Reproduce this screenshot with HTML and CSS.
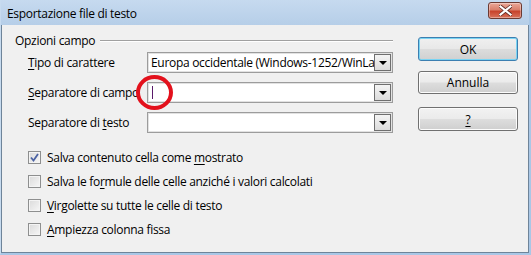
FILE: index.html
```html
<!DOCTYPE html>
<html lang="it">
<head>
    <meta charset="UTF-8">
    <title>Esportazione file di testo</title>
    <link rel="stylesheet" href="styles.css">
</head>
<body>
    <div class="window">
        <div class="titlebar">
            <span class="title">Esportazione file di testo</span>
            <span class="close-btn">
                <svg width="13" height="11" viewBox="0 0 13 11">
                    <path d="M1.5 1.5 L11.5 9.5 M11.5 1.5 L1.5 9.5" stroke="#5a2620" stroke-width="3.6" stroke-linecap="square"/>
                    <path d="M1.5 1.5 L11.5 9.5 M11.5 1.5 L1.5 9.5" stroke="#fff" stroke-width="2.2" stroke-linecap="square"/>
                </svg>
            </span>
        </div>

        <div class="client">
            <div class="options">
                <div class="group-title">
                    <span>Opzioni campo</span>
                    <div class="rule"></div>
                </div>

                <div class="field-row">
                    <label><u>T</u>ipo di carattere</label>
                    <div class="combo">
                        <span class="combo-text">Europa occidentale (Windows-1252/WinLatin 1)</span>
                        <span class="combo-btn"></span>
                    </div>
                </div>
                <div class="field-row sep-row">
                    <label><u>S</u>eparatore di campo</label>
                    <div class="combo">
                        <span class="combo-text"><span class="caret"></span></span>
                        <span class="combo-btn"></span>
                    </div>
                    <span class="highlight"></span>
                </div>
                <div class="field-row last-row">
                    <label>Separatore di <u>t</u>esto</label>
                    <div class="combo">
                        <span class="combo-text"></span>
                        <span class="combo-btn"></span>
                    </div>
                </div>

                <div class="checks">
                    <div class="check-row">
                        <span class="checkbox checked">
                            <svg width="9" height="9" viewBox="0 0 9 9">
                                <path d="M1 4.5 L3.5 7.5 L8 1" fill="none" stroke="#4b62a3" stroke-width="1.8"/>
                            </svg>
                        </span>
                        <span>Salva contenuto cella come <u>m</u>ostrato</span>
                    </div>
                    <div class="check-row">
                        <span class="checkbox"></span>
                        <span>Salva le fo<u>r</u>mule delle celle anziché i valori calcolati</span>
                    </div>
                    <div class="check-row">
                        <span class="checkbox"></span>
                        <span><u>V</u>irgolette su tutte le celle di testo</span>
                    </div>
                    <div class="check-row">
                        <span class="checkbox"></span>
                        <span><u>A</u>mpiezza colonna fissa</span>
                    </div>
                </div>
            </div>

            <div class="buttons">
                <div class="btn default">OK</div>
                <div class="btn cancel">Annulla</div>
                <div class="btn help"><u>?</u></div>
            </div>
        </div>
    </div>
</body>
</html>
```

FILE: styles.css
```css
/* Basic styling */
* {
    margin: 0;
    padding: 0;
    box-sizing: border-box;
}

body {
    font-family: 'Open Sans', 'Noto Sans', sans-serif;
    font-size: 12px;
    letter-spacing: -0.3px;
    color: #000;
    background-color: #b9d1ea;
}

u {
    text-decoration: underline;
    text-underline-offset: 2px;
}

/* Window frame */
.window {
    width: 531px;
    height: 255px;
    display: flex;
    flex-direction: column;
    background-color: #b9d1ea;
    border-left: 1px solid #c7dbef;
    border-right: 2px solid #a9c7e6;
    border-bottom: 2px solid #a9c7e6;
}

.titlebar {
    height: 25px;
    display: flex;
    align-items: center;
    justify-content: space-between;
    padding: 0 7px 0 6px;
    background: linear-gradient(to bottom, #c6daef, #b6cee8);
}

.title {
    padding-top: 1px;
}

.close-btn {
    width: 34px;
    height: 17px;
    margin-top: -4px;
    display: flex;
    align-items: center;
    justify-content: center;
    border: 1px solid #6b3a32;
    border-radius: 3px;
    background: linear-gradient(to bottom, #eba898 0%, #d9806c 45%, #c7432c 55%, #d8735c 100%);
    box-shadow: inset 0 0 0 1px rgba(255, 255, 255, 0.35);
}

/* Client area */
.client {
    flex: 1;
    display: flex;
    gap: 25px;
    background-color: #f0f0f0;
    border-left: 1px solid #6e8499;
    border-right: 1px solid #6e8499;
    border-bottom: 1px solid #6e8499;
    padding: 7px 0 0 13px;
}

.options {
    width: 378px;
}

.group-title {
    display: flex;
    align-items: center;
    gap: 5px;
    height: 16px;
    margin-bottom: 4px;
}

.rule {
    flex: 1;
    height: 2px;
    border-top: 1px solid #a0a0a0;
    border-bottom: 1px solid #fff;
    margin-top: 1px;
}

/* Field rows */
.field-row {
    position: relative;
    display: flex;
    align-items: center;
    padding-left: 13px;
    margin-bottom: 9px;
}

.field-row.last-row {
    margin-bottom: 12px;
}

.field-row label {
    width: 119px;
}

.combo {
    width: 246px;
    height: 21px;
    display: flex;
    align-items: center;
    justify-content: space-between;
    background-color: #fff;
    border: 1px solid #9c9c9c;
    box-shadow: inset 0 0 0 1px #e2e2e2;
    padding: 0 1px 0 3px;
    overflow: hidden;
}

.combo-text {
    flex: 1;
    white-space: nowrap;
    overflow: hidden;
    display: flex;
    align-items: center;
}

.caret {
    display: block;
    width: 1px;
    height: 13px;
    margin-left: 1px;
    background-color: #5a1a6a;
}

.combo-btn {
    width: 17px;
    height: 17px;
    flex-shrink: 0;
    position: relative;
    border: 1px solid #6f6f6f;
    background: linear-gradient(to bottom, #f4f4f4, #dcdcdc);
}

.combo-btn::after {
    content: "";
    position: absolute;
    left: 4px;
    top: 6px;
    border-left: 4px solid transparent;
    border-right: 4px solid transparent;
    border-top: 4px solid #000;
}

.highlight {
    position: absolute;
    left: 121px;
    top: -7px;
    width: 37px;
    height: 35px;
    border: 4px solid #e3111c;
    border-radius: 50%;
}

/* Check boxes */
.check-row {
    height: 24px;
    display: flex;
    align-items: center;
    gap: 6px;
    padding-left: 13px;
}

.checkbox {
    width: 13px;
    height: 13px;
    display: flex;
    align-items: center;
    justify-content: center;
    border: 1px solid #8e8f8f;
    background: linear-gradient(135deg, #dadada, #f7f7f7);
    box-shadow: inset 0 0 0 1px #f4f4f4;
}

/* Buttons */
.buttons {
    display: flex;
    flex-direction: column;
    padding-top: 5px;
}

.btn {
    width: 100px;
    height: 24px;
    display: flex;
    align-items: center;
    justify-content: center;
    letter-spacing: 0;
    border: 1px solid #707070;
    border-radius: 3px;
    background: linear-gradient(to bottom, #f2f2f2 0%, #ebebeb 48%, #dddddd 52%, #cfcfcf 100%);
    box-shadow: inset 0 0 0 1px #fcfcfc;
}

.btn.default {
    border-color: #3c7fb1;
    box-shadow: inset 0 0 0 1px #7ad4f3;
    background: linear-gradient(to bottom, #f0f0f0 0%, #e8e8e8 48%, #dcdcdc 52%, #d0d0d0 100%);
    margin-bottom: 10px;
}

.btn.cancel {
    height: 23px;
    margin-bottom: 13px;
}
```
